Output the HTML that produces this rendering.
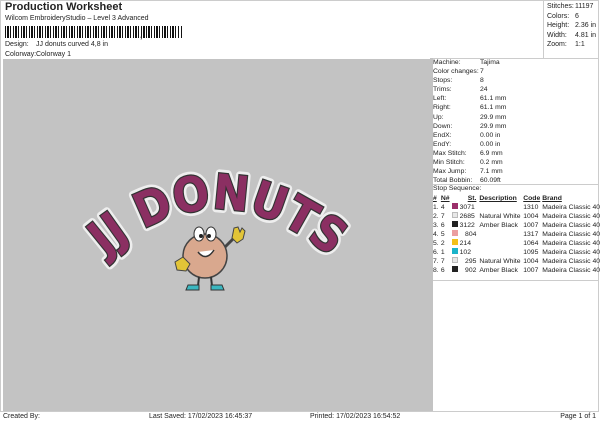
<!DOCTYPE html>
<html><head><style>
body{margin:0;width:600px;height:424px;background:#fff;font-family:"Liberation Sans",sans-serif;font-size:7px;color:#222;position:relative;overflow:hidden}
.a{position:absolute;white-space:nowrap}
.bc{position:absolute;left:5px;top:26px;height:12px;width:178px;background:repeating-linear-gradient(90deg,#111 0 1px,#fff 1px 2px,#111 2px 4px,#fff 4px 5px,#111 5px 6px,#fff 6px 8px)}
table{border-collapse:collapse;font-size:6.8px}
td{padding:0;height:9.1px;line-height:9.1px;white-space:nowrap}
.s td{height:9px;line-height:9px}
</style></head><body>
<div class="a" style="left:5px;top:1px;font-size:11px;font-weight:bold">Production Worksheet</div>
<div class="a" style="left:5px;top:15px">Wilcom EmbroideryStudio – Level 3 Advanced</div>
<div class="bc"></div><div class="a" style="left:140px;top:30px;font-size:9px;font-weight:bold">,</div>
<div class="bc" style="left:146px;width:34px"></div>
<div class="a" style="left:5px;top:41px">Design:</div><div class="a" style="left:36px;top:41px">JJ donuts curved 4,8 in</div>
<div class="a" style="left:5px;top:51px">Colorway:</div><div class="a" style="left:36px;top:51px">Colorway 1</div>
<div class="a" style="left:0;top:0;width:599px;height:412px;border:1px solid #ccc;box-sizing:border-box"></div>
<div class="a" style="left:543px;top:0;width:56px;height:58px;border-left:1px solid #ccc"></div>
<div class="a" style="left:547px;top:2px;line-height:9.6px">Stitches:<br>Colors:<br>Height:<br>Width:<br>Zoom:</div>
<div class="a" style="left:575px;top:2px;line-height:9.6px">11197<br>6<br>2.36 in<br>4.81 in<br>1:1</div>
<div class="a" style="left:3px;top:59px;width:427px;height:352px;background:#c3c3c3"></div>
<div class="a" style="left:430px;top:58px;width:169px;border-top:1px solid #ccc"></div>
<svg class="a" style="left:3px;top:59px" width="427" height="352" viewBox="3 59 427 352">
<defs><path id="arc" d="M104 258 Q 216 160 332 258"/></defs>
<text font-family="DejaVu Sans" font-weight="bold" font-size="48" fill="none" stroke="#eee" stroke-width="8" stroke-linejoin="round"><textPath href="#arc" startOffset="50%" text-anchor="middle" textLength="250" lengthAdjust="spacingAndGlyphs">JJ DONUTS</textPath></text>
<text font-family="DejaVu Sans" font-weight="bold" font-size="48" fill="#8b2f62" stroke="#333" stroke-width="2.5" paint-order="stroke"><textPath href="#arc" startOffset="50%" text-anchor="middle" textLength="250" lengthAdjust="spacingAndGlyphs">JJ DONUTS</textPath></text>
<path d="M222 250 L236 236" stroke="#444" stroke-width="3"/>
<circle cx="205" cy="256" r="22" fill="#d9a88e" stroke="#444" stroke-width="1.5"/>
<ellipse cx="199" cy="234" rx="5" ry="7" fill="#fff" stroke="#333"/><ellipse cx="211" cy="234" rx="5" ry="7" fill="#fff" stroke="#333"/>
<circle cx="201" cy="236" r="2" fill="#222"/><circle cx="209" cy="236" r="2" fill="#222"/>
<path d="M198 252 Q206 262 214 250" stroke="#333" fill="#fff" stroke-width="1.5"/>
<path d="M232 238 l2 -10 4 -1 2 5 2 -4 3 3 -2 8 -6 4z" fill="#e2c437" stroke="#444"/>
<path d="M183 257 l-8 5 2 8 9 1 4 -7z" fill="#e2c437" stroke="#444"/>
<path d="M199 277 l-1 9 M211 277 l1 9" stroke="#333" stroke-width="2"/>
<path d="M188 285 h11 v5 h-13z M211 285 h11 l2 5 h-13z" fill="#3bb7c0" stroke="#333"/>
</svg>
<div class="a" style="left:430px;top:58px;width:3px;height:353px;background:#c3c3c3"></div>
<table class="a" style="left:433px;top:58px">
<tr><td style="width:47px">Machine:</td><td>Tajima</td></tr>
<tr><td>Color changes:</td><td>7</td></tr>
<tr><td>Stops:</td><td>8</td></tr>
<tr><td>Trims:</td><td>24</td></tr>
<tr><td>Left:</td><td>61.1 mm</td></tr>
<tr><td>Right:</td><td>61.1 mm</td></tr>
<tr><td>Up:</td><td>29.9 mm</td></tr>
<tr><td>Down:</td><td>29.9 mm</td></tr>
<tr><td>EndX:</td><td>0.00 in</td></tr>
<tr><td>EndY:</td><td>0.00 in</td></tr>
<tr><td>Max Stitch:</td><td>6.9 mm</td></tr>
<tr><td>Min Stitch:</td><td>0.2 mm</td></tr>
<tr><td>Max Jump:</td><td>7.1 mm</td></tr>
<tr><td>Total Bobbin:</td><td>60.09ft</td></tr>
</table>
<div class="a" style="left:433px;top:184px;width:166px;border-top:1px solid #ccc"></div>
<div class="a" style="left:433px;top:185px;font-size:6.8px">Stop Sequence:</div>
<table class="a s" style="left:433px;top:194px">
<tr style="font-weight:bold;text-decoration:underline"><td style="width:8px">#</td><td style="width:11px">N#</td><td style="width:8px"></td><td style="width:17px;text-align:right;padding-right:3px">St.</td><td style="width:44px">Description</td><td style="width:19px">Code</td><td>Brand</td></tr>
<tr><td>1.</td><td>4</td><td><span style="display:inline-block;width:6px;height:6px;background:#9b2e6a"></span></td><td>3071</td><td></td><td>1310</td><td>Madeira Classic 40</td></tr>
<tr><td>2.</td><td>7</td><td><span style="display:inline-block;width:6px;height:6px;background:#e8e8e8;border:1px solid #bbb;box-sizing:border-box"></span></td><td>2685</td><td>Natural White</td><td>1004</td><td>Madeira Classic 40</td></tr>
<tr><td>3.</td><td>6</td><td><span style="display:inline-block;width:6px;height:6px;background:#222"></span></td><td>3122</td><td>Amber Black</td><td>1007</td><td>Madeira Classic 40</td></tr>
<tr><td>4.</td><td>5</td><td><span style="display:inline-block;width:6px;height:6px;background:#eb9ea0"></span></td><td style="text-align:right;padding-right:3px">804</td><td></td><td>1317</td><td>Madeira Classic 40</td></tr>
<tr><td>5.</td><td>2</td><td><span style="display:inline-block;width:6px;height:6px;background:#f2c01a"></span></td><td>214</td><td></td><td>1064</td><td>Madeira Classic 40</td></tr>
<tr><td>6.</td><td>1</td><td><span style="display:inline-block;width:6px;height:6px;background:#1ab3c9"></span></td><td>102</td><td></td><td>1095</td><td>Madeira Classic 40</td></tr>
<tr><td>7.</td><td>7</td><td><span style="display:inline-block;width:6px;height:6px;background:#e8e8e8;border:1px solid #bbb;box-sizing:border-box"></span></td><td style="text-align:right;padding-right:3px">295</td><td>Natural White</td><td>1004</td><td>Madeira Classic 40</td></tr>
<tr><td>8.</td><td>6</td><td><span style="display:inline-block;width:6px;height:6px;background:#222"></span></td><td style="text-align:right;padding-right:3px">902</td><td>Amber Black</td><td>1007</td><td>Madeira Classic 40</td></tr>
</table>
<div class="a" style="left:433px;top:280px;width:166px;border-top:1px solid #ccc"></div>
<div class="a" style="left:3px;top:413px">Created By:</div>
<div class="a" style="left:149px;top:413px">Last Saved: 17/02/2023 16:45:37</div>
<div class="a" style="left:310px;top:413px">Printed: 17/02/2023 16:54:52</div>
<div class="a" style="right:4px;top:413px">Page 1 of 1</div>
</body></html>
